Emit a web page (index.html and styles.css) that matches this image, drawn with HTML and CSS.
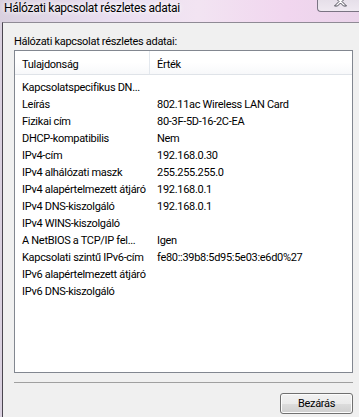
FILE: index.html
```html
<!DOCTYPE html>
<html lang="hu">
<head>
  <meta charset="UTF-8">
  <title>Hálózati kapcsolat részletes adatai</title>
  <link rel="stylesheet" href="styles.css">
</head>
<body>

  <div class="window">
    <div class="titlebar">
      <span class="title">Hálózati kapcsolat részletes adatai</span>
      <div class="close-btn">
        <svg viewBox="0 0 14 10" width="14" height="10">
          <path d="M2 0 L5 3 L8 0 L11 0 L6.5 4.5 L11 9 L8 9 L5 6 L2 9 L-1 9 L3.5 4.5 L-1 0 Z" transform="translate(1.5 -3)" fill="#fff" stroke="#3c3c48" stroke-width="0.9"/>
        </svg>
      </div>
    </div>

    <div class="client">
      <div class="caption">Hálózati kapcsolat részletes adatai:</div>

      <div class="listview">
        <div class="lv-header">
          <div class="col-prop">Tulajdonság</div>
          <div class="col-val">Érték</div>
        </div>
        <div class="lv-body">
          <div class="lv-row"><span class="col-prop">Kapcsolatspecifikus DN...</span><span class="col-val"></span></div>
          <div class="lv-row"><span class="col-prop">Leírás</span><span class="col-val">802.11ac Wireless LAN Card</span></div>
          <div class="lv-row"><span class="col-prop">Fizikai cím</span><span class="col-val">80-3F-5D-16-2C-EA</span></div>
          <div class="lv-row"><span class="col-prop">DHCP-kompatibilis</span><span class="col-val">Nem</span></div>
          <div class="lv-row"><span class="col-prop">IPv4-cím</span><span class="col-val">192.168.0.30</span></div>
          <div class="lv-row"><span class="col-prop">IPv4 alhálózati maszk</span><span class="col-val">255.255.255.0</span></div>
          <div class="lv-row"><span class="col-prop">IPv4 alapértelmezett átjáró</span><span class="col-val">192.168.0.1</span></div>
          <div class="lv-row"><span class="col-prop">IPv4 DNS-kiszolgáló</span><span class="col-val">192.168.0.1</span></div>
          <div class="lv-row"><span class="col-prop">IPv4 WINS-kiszolgáló</span><span class="col-val"></span></div>
          <div class="lv-row"><span class="col-prop">A NetBIOS a TCP/IP fel...</span><span class="col-val">Igen</span></div>
          <div class="lv-row"><span class="col-prop">Kapcsolati szintű IPv6-cím</span><span class="col-val">fe80::39b8:5d95:5e03:e6d0%27</span></div>
          <div class="lv-row"><span class="col-prop">IPv6 alapértelmezett átjáró</span><span class="col-val"></span></div>
          <div class="lv-row"><span class="col-prop">IPv6 DNS-kiszolgáló</span><span class="col-val"></span></div>
        </div>
      </div>

      <div class="separator"></div>

      <div class="button-row">
        <button class="btn">Bezárás</button>
      </div>
    </div>
  </div>

</body>
</html>
```

FILE: styles.css
```css
body {
  margin: 0;
  font-family: Roboto, "Liberation Sans", sans-serif;
  font-size: 11px;
  letter-spacing: -0.3px;
  color: #000;
  overflow: hidden;
}

.window {
  width: 359px;
  height: 417px;
  display: flex;
  flex-direction: column;
  padding-left: 2px;
  box-sizing: border-box;
  background: linear-gradient(to right, #d9d0df 0%, #e9def0 30%, #f2e4f2 55%, #f1d6ef 80%, #ead4ea 100%);
}

.titlebar {
  height: 22px;
  display: flex;
  align-items: flex-start;
}

.title {
  font-size: 12px;
  line-height: 14px;
  margin-top: 1px;
  margin-left: 2px;
  text-shadow: 0 0 6px #fff, 0 0 4px #fff;
}

.close-btn {
  margin-left: auto;
  margin-top: -6px;
  width: 42px;
  height: 18px;
  box-sizing: border-box;
  border: 1px solid #7a7483;
  border-right: none;
  border-bottom-left-radius: 4px;
  background: linear-gradient(#e2dbe6, #efe9f1);
  display: flex;
  justify-content: center;
  align-items: center;
}

.close-btn svg {
  margin-left: 4px;
  margin-top: 3px;
}

.client {
  flex: 1;
  background: #f0f0f0;
  border-top: 1px solid #8f8a95;
  border-left: 1px solid #4b4650;
  padding: 12px 6px 0 11px;
  display: flex;
  flex-direction: column;
}

.caption {
  line-height: 14px;
}

.listview {
  margin-top: 1px;
  height: 323px;
  box-sizing: border-box;
  border: 1px solid #828790;
  background: #fff;
}

.lv-header {
  height: 24px;
  box-sizing: border-box;
  display: flex;
  border-bottom: 1px solid #dfe3e8;
  background: linear-gradient(#ffffff 50%, #f7f8fa);
}

.col-prop {
  width: 135px;
  padding-left: 7px;
  box-sizing: border-box;
  white-space: nowrap;
  overflow: hidden;
}

.col-val {
  padding-left: 7px;
  white-space: nowrap;
}

.lv-header .col-prop,
.lv-header .col-val {
  line-height: 13px;
  padding-top: 7px;
  box-sizing: border-box;
}

.lv-header .col-prop {
  border-right: 1px solid #e3e8ee;
}

.lv-body {
  padding-top: 4px;
}

.lv-row {
  height: 17px;
  line-height: 17px;
  display: flex;
}

.separator {
  margin-top: 9px;
  height: 1px;
  background: #a0a0a0;
}

.button-row {
  display: flex;
  justify-content: flex-end;
  margin-top: 10px;
}

.btn {
  width: 73px;
  height: 21px;
  padding: 0;
  font-family: Roboto, "Liberation Sans", sans-serif;
  font-size: 11px;
  letter-spacing: -0.3px;
  color: #000;
  border: 1px solid #707070;
  border-radius: 3px;
  background: linear-gradient(#f2f2f2 0%, #ebebeb 50%, #dddddd 51%, #cfcfcf 100%);
  box-shadow: inset 0 0 0 1px #fcfcfc;
}
```
